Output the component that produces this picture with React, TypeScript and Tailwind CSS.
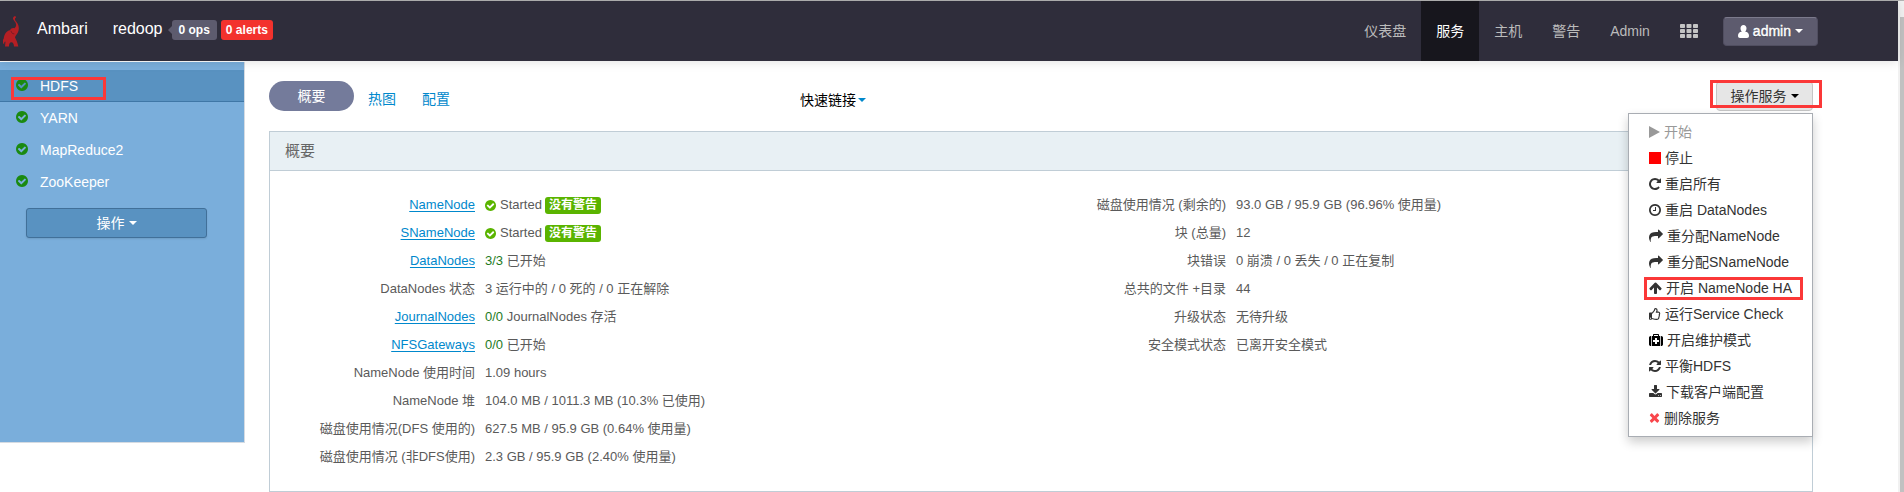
import type { ReactNode } from "react";
import { FaRegThumbsUp } from "react-icons/fa";

const CHECK =
  "M1412 734q0-28-18-46l-91-90q-19-19-45-19t-45 19l-408 407-226-226q-19-19-45-19t-45 19l-91 90q-18 18-18 46 0 27 18 45l362 362q19 19 45 19 27 0 46-19l543-543q18-18 18-45zm252 162q0 209-103 385.5t-279.5 279.5-385.5 103-385.5-103-279.5-279.5-103-385.5 103-385.5 279.5-279.5 385.5-103 385.5 103 279.5 279.5 103 385.5z";
const REPEAT =
  "M1664 256v448q0 26-19 45t-45 19h-448q-42 0-59-40-17-39 14-69l138-138q-148-137-349-137-104 0-198.500 40.500t-163.500 109.500-109.500 163.500-40.500 198.500 40.500 198.500 109.500 163.500 163.500 109.500 198.500 40.500q119 0 225-52t179-147q7-10 23-12 14 0 25 9l137 138q9 8 9.500 20.500t-7.500 22.500q-109 132-264 204.500t-327 72.500q-156 0-298-61t-245-164-164-245-61-298 61-298 164-245 245-164 298-61q147 0 284.500 55.500t244.500 156.500l130-129q29-31 70-14 39 17 39 59z";
const CLOCK =
  "M1024 544v448q0 14-9 23t-23 9h-320q-14 0-23-9t-9-23v-64q0-14 9-23t23-9h224v-352q0-14 9-23t23-9h64q14 0 23 9t9 23zm416 352q0-148-73-273t-198-198-273-73-273 73-198 198-73 273 73 273 198 198 273 73 273-73 198-198 73-273zm224 0q0 209-103 385.500t-279.500 279.500-385.500 103-385.500-103-279.500-279.500-103-385.500 103-385.500 279.500-279.500 385.500-103 385.500 103 279.500 279.500 103 385.500z";
const SHARE =
  "M1792 640q0 26-19 45l-512 512q-19 19-45 19t-45-19-19-45v-256h-224q-98 0-175.500 6t-154 21.500-133 42.500-105.500 69.500-80 101-48.500 138.500-17.500 181q0 55 5 123 0 6 2.500 23.500t2.500 26.500q0 15-8.500 25t-23.500 10q-16 0-28-17-7-9-13-22t-13.500-30-10.500-24q-127-285-127-451 0-199 53-333 162-403 875-403h224v-256q0-26 19-45t45-19 45 19l512 512q19 19 19 45z";
const ARROW_UP =
  "M1675 971q0 51-37 90l-75 75q-38 38-91 38-54 0-90-38l-294-293v704q0 52-37.500 84.500t-90.500 32.500h-128q-53 0-90.500-32.500t-37.500-84.500v-704l-294 293q-36 38-90 38t-90-38l-75-75q-38-38-38-90 0-53 38-91l651-651q35-37 90-37 54 0 91 37l651 651q37 39 37 91z";
const MEDKIT =
  "M1280 1120v-192q0-14-9-23t-23-9h-224v-224q0-14-9-23t-23-9h-192q-14 0-23 9t-9 23v224h-224q-14 0-23 9t-9 23v192q0 14 9 23t23 9h224v224q0 14 9 23t23 9h192q14 0 23-9t9-23v-224h224q14 0 23-9t9-23zm-640-736h512v-128h-512v128zm-384 0v1280h-32q-92 0-158-66t-66-158v-832q0-92 66-158t158-66h32zm1184 0v1280h-1088v-1280h160v-160q0-40 28-68t68-28h576q40 0 68 28t28 68v160h160zm352 224v832q0 92-66 158t-158 66h-32v-1280h32q92 0 158 66t66 158z";
const REFRESH =
  "M1639 1056q0 5-1 7-64 268-268 434.500t-478 166.500q-146 0-282.500-55t-243.500-157l-129 129q-19 19-45 19t-45-19-19-45v-448q0-26 19-45t45-19h448q26 0 45 19t19 45-19 45l-137 137q71 66 161 102t187 36q134 0 250-65t186-179q11-17 53-117 8-23 30-23h192q13 0 22.500 9.500t9.500 22.500zm25-800v448q0 26-19 45t-45 19h-448q-26 0-45-19t-19-45 19-45l138-138q-148-137-349-137-134 0-250 65t-186 179q-11 17-53 117-8 23-30 23h-199q-13 0-22.500-9.500t-9.500-22.500v-7q65-268 270-434.500t480-166.500q146 0 284 55.500t245 156.500l130-129q19-19 45-19t45 19 19 45z";
const DOWNLOAD =
  "M1344 1344q0-26-19-45t-45-19-45 19-19 45 19 45 45 19 45-19 19-45zm256 0q0-26-19-45t-45-19-45 19-19 45 19 45 45 19 45-19 19-45zm128-224v320q0 40-28 68t-68 28h-1472q-40 0-68-28t-28-68v-320q0-40 28-68t68-28h465l135 136q58 56 136 56t136-56l136-136h464q40 0 68 28t28 68zm-325-569q17 41-14 70l-448 448q-18 19-45 19t-45-19l-448-448q-31-29-14-70 17-39 59-39h256v-448q0-26 19-45t45-19h256q26 0 45 19t19 45v448h256q42 0 59 39z";
const TIMES =
  "M1490 1322q0 40-28 68l-136 136q-28 28-68 28t-68-28l-294-294-294 294q-28 28-68 28t-68-28l-136-136q-28-28-28-68t28-68l294-294-294-294q-28-28-28-68t28-68l136-136q28-28 68-28t68 28l294 294 294-294q28-28 68-28t68 28l136 136q28 28 28 68t-28 68l-294 294 294 294q28 28 28 68z";

function Icon({ d, box, className }: { d: string; box: string; className: string }) {
  return (
    <svg viewBox={box} className={`shrink-0 ${className}`} fill="currentColor" aria-hidden="true">
      <path d={d} />
    </svg>
  );
}

function Caret({ className = "" }: { className?: string }) {
  return <span className={`inline-block border-x-4 border-t-4 border-x-transparent ${className}`} />;
}

function Elephant() {
  return (
    <svg viewBox="0 0 48 92" className="ml-[3px] h-[31px] w-4 shrink-0" fill="#b51f24" aria-hidden="true">
      <path d="M33 1c5-2 8 1 5 4-4 3-2 7 2 12 7 8 10 20 5 31-3 7-8 10-9 16 4 8 8 16 10 27H33c0-8-3-13-8-13s-7 5-7 13H6c0-6 2-11 1-15-3 1-4 5-3 9-6-3-6-12-2-17 2-15 8-24 19-26 3-6 8-8 13-6 7-4 7-14 1-20-4-5-8-10-2-15z" />
      <path d="M24 44c1 6 4 9 10 9" fill="none" stroke="#7d1a24" strokeWidth="3" />
    </svg>
  );
}

const services = ["HDFS", "YARN", "MapReduce2", "ZooKeeper"];

const navItems = ["仪表盘", "服务", "主机", "警告", "Admin"];

type MenuItem = { icon: ReactNode; text: string; muted?: boolean; marked?: boolean };

const menuItems: MenuItem[] = [
  {
    icon: (
      <svg viewBox="0 0 11 12" className="h-3 w-[11px] shrink-0" fill="currentColor" aria-hidden="true">
        <path d="M0 0v12l11-6z" />
      </svg>
    ),
    text: "开始",
    muted: true,
  },
  { icon: <span className="size-3 shrink-0 bg-[#f00]" />, text: "停止" },
  { icon: <Icon d={REPEAT} box="128 0 1536 1792" className="h-3.5 w-3" />, text: "重启所有" },
  { icon: <Icon d={CLOCK} box="128 0 1536 1792" className="h-3.5 w-3" />, text: "重启 DataNodes" },
  { icon: <Icon d={SHARE} box="0 0 1792 1792" className="size-3.5" />, text: "重分配NameNode" },
  { icon: <Icon d={SHARE} box="0 0 1792 1792" className="size-3.5" />, text: "重分配SNameNode" },
  { icon: <Icon d={ARROW_UP} box="64 0 1664 1792" className="h-3.5 w-[13px]" />, text: "开启 NameNode HA", marked: true },
  { icon: <FaRegThumbsUp className="size-3 shrink-0" />, text: "运行Service Check" },
  { icon: <Icon d={MEDKIT} box="0 0 1792 1792" className="size-3.5 text-black" />, text: "开启维护模式" },
  { icon: <Icon d={REFRESH} box="128 0 1536 1792" className="h-3.5 w-3" />, text: "平衡HDFS" },
  { icon: <Icon d={DOWNLOAD} box="64 0 1664 1792" className="h-3.5 w-[13px]" />, text: "下载客户端配置" },
  { icon: <Icon d={TIMES} box="192 64 1408 1792" className="h-3.5 w-[11px] text-[#f9464c]" />, text: "删除服务" },
];

type Row = { label: string; link?: boolean; value: ReactNode };

function Started() {
  return (
    <span className="flex items-center">
      <Icon d={CHECK} box="128 128 1536 1536" className="size-[11px] text-[#5ab400]" />
      <span className="ml-1">Started</span>
      <span className="ml-[3px] rounded-[3px] bg-[#5ab400] px-1 text-xs leading-[17px] font-bold text-white">没有警告</span>
    </span>
  );
}

function Count({ n, text }: { n: string; text: string }) {
  return (
    <>
      <span className="text-[#1e7b1e]">{n}</span> {text}
    </>
  );
}

const leftRows: Row[] = [
  { label: "NameNode", link: true, value: <Started /> },
  { label: "SNameNode", link: true, value: <Started /> },
  { label: "DataNodes", link: true, value: <Count n="3/3" text="已开始" /> },
  { label: "DataNodes 状态", value: "3 运行中的 / 0 死的 / 0 正在解除" },
  { label: "JournalNodes", link: true, value: <Count n="0/0" text="JournalNodes 存活" /> },
  { label: "NFSGateways", link: true, value: <Count n="0/0" text="已开始" /> },
  { label: "NameNode 使用时间", value: "1.09 hours" },
  { label: "NameNode 堆", value: "104.0 MB / 1011.3 MB (10.3% 已使用)" },
  { label: "磁盘使用情况(DFS 使用的)", value: "627.5 MB / 95.9 GB (0.64% 使用量)" },
  { label: "磁盘使用情况 (非DFS使用)", value: "2.3 GB / 95.9 GB (2.40% 使用量)" },
];

const rightRows: Row[] = [
  { label: "磁盘使用情况 (剩余的)", value: "93.0 GB / 95.9 GB (96.96% 使用量)" },
  { label: "块 (总量)", value: "12" },
  { label: "块错误", value: "0 崩溃 / 0 丢失 / 0 正在复制" },
  { label: "总共的文件 +目录", value: "44" },
  { label: "升级状态", value: "无待升级" },
  { label: "安全模式状态", value: "已离开安全模式" },
];

function InfoTable({ rows }: { rows: Row[] }) {
  return (
    <table className="w-full table-fixed border-collapse">
      <tbody>
        {rows.map((r) => (
          <tr key={r.label} className="h-7">
            <th scope="row" className="w-[205px] p-0 text-right font-normal whitespace-nowrap">
              {r.link ? (
                <a href="#component" className="text-[#0088cc] underline underline-offset-2">
                  {r.label}
                </a>
              ) : (
                r.label
              )}
            </th>
            <td className="py-0 pr-0 pl-2.5 whitespace-nowrap">{r.value}</td>
          </tr>
        ))}
      </tbody>
    </table>
  );
}

export default function App() {
  return (
    <div className="flex border-t border-[#b4b4b4] bg-white font-['Liberation_Sans','Noto_Sans_CJK_SC',sans-serif] text-sm text-[#333]">
      <div className="min-w-0 flex-1">
        <header className="relative z-10 flex h-[60px] items-center bg-[#2f2d3b] shadow-[0_1px_10px_rgba(0,0,0,0.12)]">
          <Elephant />
          <div className="mb-0.5 ml-[18px] flex items-center">
            <a href="#home" className="mb-0.5 text-base text-white">
              Ambari
            </a>
            <a href="#cluster" className="mb-0.5 ml-[25px] text-base text-white">
              redoop
            </a>
            <span className="ml-[5px] h-0 w-0 border-y-4 border-r-4 border-y-transparent border-r-[#5d5b6e]" />
            <button className="h-5 rounded-[3px] bg-[#5d5b6e] px-[7px] text-xs font-bold text-white">0 ops</button>
            <button className="ml-1 h-5 rounded-[3px] bg-[#f3322d] px-[5px] text-xs font-bold text-white">0 alerts</button>
          </div>
          <nav className="ml-auto flex h-full">
            {navItems.map((t) => (
              <a
                key={t}
                href="#nav"
                className={
                  t === "服务"
                    ? "flex items-center bg-[#17161d] px-[15px] text-white"
                    : "flex items-center px-[15px] text-[#bbb]"
                }
              >
                {t}
              </a>
            ))}
          </nav>
          <button aria-label="Views" className="ml-[15px] text-[#c4c4c4]">
            <svg viewBox="0 0 18 14" className="h-3.5 w-[18px]" fill="currentColor" aria-hidden="true">
              {[0, 5, 10].map((y) =>
                [0, 6.5, 13].map((x) => <rect key={`${x}-${y}`} x={x} y={y} width="5" height="4" rx="0.8" />)
              )}
            </svg>
          </button>
          <button className="mr-20 ml-[25px] flex h-[29px] items-center rounded-sm border border-[#504e60] border-t-[#7c7a8c] bg-[#5d5b6e] px-3.5 text-white [text-shadow:0_1px_1px_rgba(0,0,0,0.4)]">
            <svg viewBox="0 0 11 13" className="mr-1 h-[13px] w-[11px]" fill="currentColor" aria-hidden="true">
              <path d="M5.500 0C7.300 0 8.500 1.300 8.500 3.300c0 1.500-.6 2.700-1.300 3.400C9.800 6.900 11 8.300 11 10.800 11 12.200 10.200 13 9 13H2C.8 13 0 12.200 0 10.800 0 8.300 1.200 6.900 3.800 6.700 3.100 6 2.500 4.800 2.500 3.300 2.500 1.300 3.700 0 5.500 0z" />
            </svg>
            <span className="[-webkit-text-stroke:0.4px]">admin</span>
            <Caret className="ml-1 border-t-white" />
          </button>
        </header>

        <div className="flex items-start">
          <aside className="mt-px w-[245px] shrink-0 border-r border-b border-[#d5dbe2] bg-[#7aaedb] pt-2 pb-[204px]">
            <ul>
              {services.map((s) => (
                <li key={s}>
                  <a
                    href="#service"
                    className={
                      s === "HDFS"
                        ? "relative flex h-8 items-center border-b border-[#3f77a6] bg-[#5992c1] pl-4 text-white"
                        : "flex h-8 items-center pl-4 text-white"
                    }
                  >
                    <Icon d={CHECK} box="128 128 1536 1536" className="mb-0.5 size-3 text-[#1a8a10]" />
                    <span className="ml-3">{s}</span>
                    {s === "HDFS" && (
                      <span className="absolute top-[7px] left-[11px] h-[23px] w-[95px] border-[3px] border-[#fb3838]" />
                    )}
                  </a>
                </li>
              ))}
            </ul>
            <button className="mt-2.5 ml-[26px] flex h-[30px] w-[181px] items-center justify-center rounded-[3px] border border-[#417099] bg-[#5992c1] text-white shadow-[0_1px_2px_rgba(0,0,0,0.1)]">
              操作
              <Caret className="ml-1 border-t-white" />
            </button>
          </aside>

          <main className="mr-[85px] ml-6 min-w-0 flex-1">
            <div className="flex h-[70px] items-center">
              <a href="#summary" className="flex h-[30px] w-[85px] items-center justify-center rounded-full bg-[#747b9b] text-white">
                概要
              </a>
              <a href="#heatmap" className="mt-1.5 ml-3.5 text-[#0088cc]">
                热图
              </a>
              <a href="#configs" className="mt-1.5 ml-[26px] text-[#0088cc]">
                配置
              </a>
              <button className="mt-2 ml-[350px] flex items-center text-black">
                快速链接
                <Caret className="ml-0.5 border-t-[#0088cc]" />
              </button>
              <div className="relative ml-auto">
                <button className="flex h-[30px] w-[97px] items-center justify-center rounded-sm border border-[#c5c5c5] bg-[#e6e6e6] text-[#333]">
                  操作服务
                  <Caret className="ml-1 border-t-black" />
                </button>
                <span className="pointer-events-none absolute -top-px -left-[6px] h-7 w-28 border-[3px] border-[#fb3838]" />
                <ul className="absolute top-8 right-0 z-20 w-[185px] border border-[#a9adb3] bg-white py-[5px] shadow-[0_5px_10px_rgba(0,0,0,0.2)]">
                  {menuItems.map((m) => (
                    <li key={m.text} className="relative">
                      <button
                        className={
                          m.muted
                            ? "flex h-[26px] w-full items-center gap-1 pl-5 whitespace-nowrap text-[#999]"
                            : "flex h-[26px] w-full items-center gap-1 pl-5 whitespace-nowrap text-[#333]"
                        }
                      >
                        {m.icon}
                        <span>{m.text}</span>
                      </button>
                      {m.marked && (
                        <span className="pointer-events-none absolute top-0.5 left-[15px] h-[23px] w-[159px] border-[3px] border-[#fb3838]" />
                      )}
                    </li>
                  ))}
                </ul>
              </div>
            </div>

            <section className="border border-[#c0cdd6]">
              <h2 className="flex h-[39px] items-center border-b border-[#c0cdd6] bg-[#e8f0f4] px-[15px] text-[15px] text-[#666]">
                概要
              </h2>
              <div className="grid grid-cols-[751fr_791fr] items-start py-5 text-[13px] leading-5 text-[#5a5a5a]">
                <InfoTable rows={leftRows} />
                <InfoTable rows={rightRows} />
              </div>
            </section>
          </main>
        </div>
      </div>

      <div className="flex w-1.5 shrink-0 flex-col bg-[#f1f1f1]" aria-hidden="true">
        <div className="mt-4 ml-0.5 flex-1 bg-[#c1c1c1]" />
      </div>
    </div>
  );
}
